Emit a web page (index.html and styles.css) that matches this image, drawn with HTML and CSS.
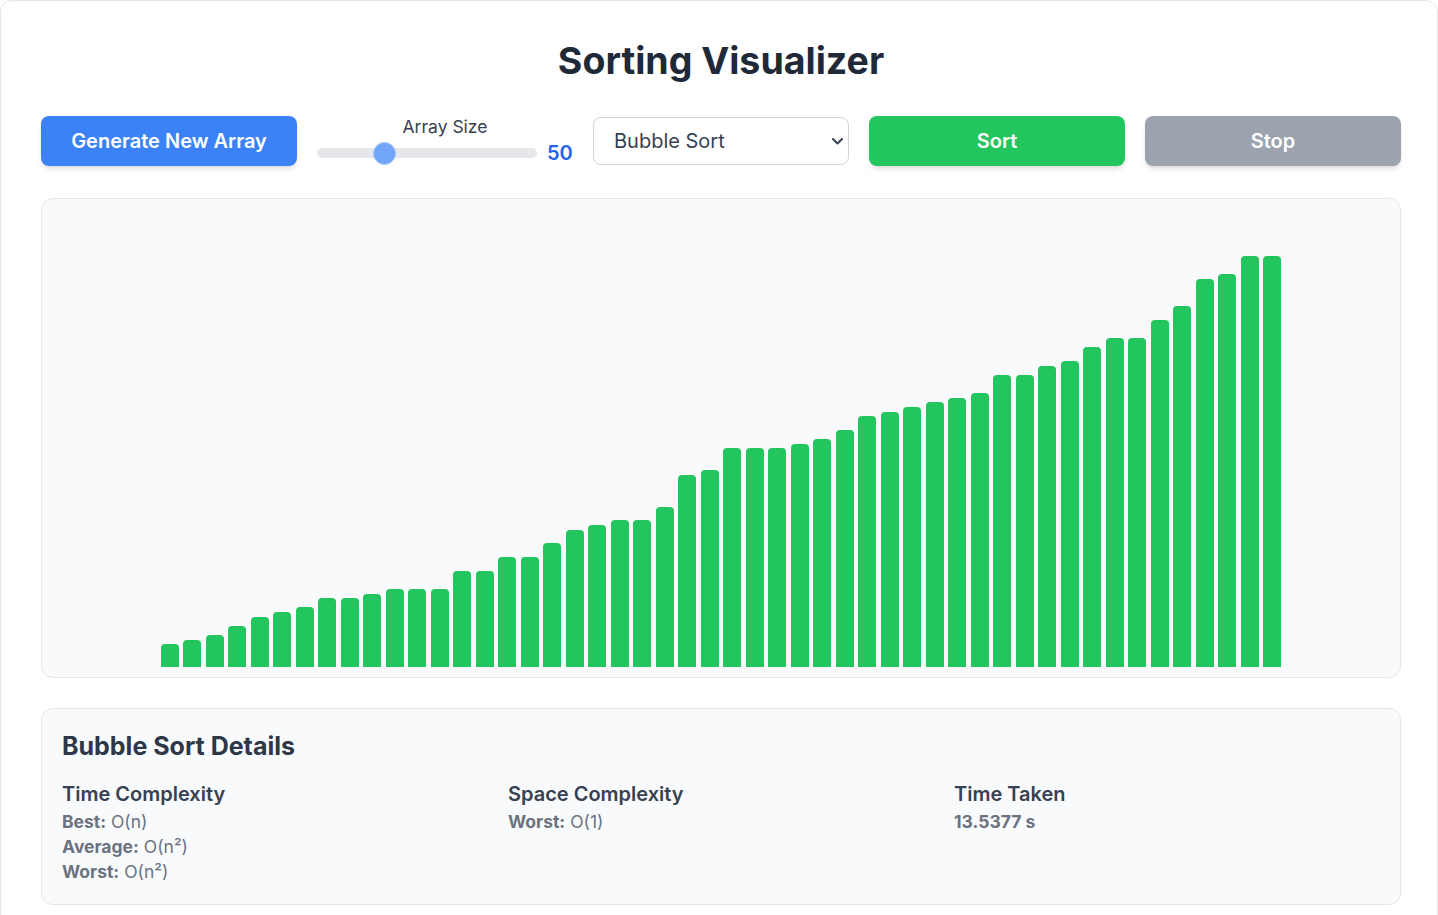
FILE: index.html
```html
<!DOCTYPE html>
<html lang="en">
<head>
<meta charset="utf-8">
<title>Sorting Visualizer</title>
<link rel="stylesheet" href="styles.css">
</head>
<body>
<div class="app">
  <h1 class="title">Sorting Visualizer</h1>
  <div class="controls">
    <button class="btn btn-blue">Generate New Array</button>
    <div class="size-group">
      <label class="size-label" for="size">Array Size</label>
      <div class="size-row">
        <input id="size" class="range" type="range" min="10" max="150" value="50">
        <span class="size-value">50</span>
      </div>
    </div>
    <div class="select-wrap">
      <select class="algo-select">
        <option>Bubble Sort</option>
        <option>Selection Sort</option>
        <option>Insertion Sort</option>
        <option>Merge Sort</option>
        <option>Quick Sort</option>
      </select>
      <svg class="chevron" width="11" height="7" viewBox="0 0 11 7" aria-hidden="true"><polyline points="1,1 5.5,5.5 10,1" fill="none" stroke="#374151" stroke-width="2" stroke-linecap="round" stroke-linejoin="round"/></svg>
    </div>
    <button class="btn btn-green">Sort</button>
    <button class="btn btn-gray">Stop</button>
  </div>

  <div class="chart">
    <div class="bar" style="height:22.7px"></div>
    <div class="bar" style="height:26.7px"></div>
    <div class="bar" style="height:31.7px"></div>
    <div class="bar" style="height:40.7px"></div>
    <div class="bar" style="height:49.7px"></div>
    <div class="bar" style="height:54.7px"></div>
    <div class="bar" style="height:59.7px"></div>
    <div class="bar" style="height:68.7px"></div>
    <div class="bar" style="height:68.7px"></div>
    <div class="bar" style="height:72.7px"></div>
    <div class="bar" style="height:77.7px"></div>
    <div class="bar" style="height:77.7px"></div>
    <div class="bar" style="height:77.7px"></div>
    <div class="bar" style="height:95.7px"></div>
    <div class="bar" style="height:95.7px"></div>
    <div class="bar" style="height:109.7px"></div>
    <div class="bar" style="height:109.7px"></div>
    <div class="bar" style="height:123.7px"></div>
    <div class="bar" style="height:136.7px"></div>
    <div class="bar" style="height:141.7px"></div>
    <div class="bar" style="height:146.7px"></div>
    <div class="bar" style="height:146.7px"></div>
    <div class="bar" style="height:159.7px"></div>
    <div class="bar" style="height:191.7px"></div>
    <div class="bar" style="height:196.7px"></div>
    <div class="bar" style="height:219px"></div>
    <div class="bar" style="height:219px"></div>
    <div class="bar" style="height:219px"></div>
    <div class="bar" style="height:223px"></div>
    <div class="bar" style="height:228px"></div>
    <div class="bar" style="height:237px"></div>
    <div class="bar" style="height:251px"></div>
    <div class="bar" style="height:255px"></div>
    <div class="bar" style="height:260px"></div>
    <div class="bar" style="height:265px"></div>
    <div class="bar" style="height:269px"></div>
    <div class="bar" style="height:274px"></div>
    <div class="bar" style="height:292px"></div>
    <div class="bar" style="height:292px"></div>
    <div class="bar" style="height:301px"></div>
    <div class="bar" style="height:306px"></div>
    <div class="bar" style="height:320px"></div>
    <div class="bar" style="height:329px"></div>
    <div class="bar" style="height:329px"></div>
    <div class="bar" style="height:347px"></div>
    <div class="bar" style="height:361px"></div>
    <div class="bar" style="height:388px"></div>
    <div class="bar" style="height:393px"></div>
    <div class="bar" style="height:411px"></div>
    <div class="bar" style="height:411px"></div>
  </div>

  <section class="details">
    <h2 class="details-title">Bubble Sort Details</h2>
    <div class="details-grid">
      <div class="detail-col">
        <h3 class="detail-head">Time Complexity</h3>
        <p class="detail-line"><b>Best:</b> O(n)</p>
        <p class="detail-line"><b>Average:</b> O(n²)</p>
        <p class="detail-line"><b>Worst:</b> O(n²)</p>
      </div>
      <div class="detail-col">
        <h3 class="detail-head">Space Complexity</h3>
        <p class="detail-line"><b>Worst:</b> O(1)</p>
      </div>
      <div class="detail-col">
        <h3 class="detail-head">Time Taken</h3>
        <p class="detail-line"><b>13.5377 s</b></p>
      </div>
    </div>
  </section>
</div>
</body>
</html>
```

FILE: styles.css
```css
* { box-sizing: border-box; }

html, body {
  margin: 0;
  padding: 0;
  background: #ffffff;
}

body {
  font-family: Inter, "Noto Sans", "Liberation Sans", sans-serif;
  color: #1f2937;
}

.app {
  width: 100%;
  min-height: 1000px;
  border: 1px solid #e5e7eb;
  border-radius: 12px;
  padding: 40px 36px 40px 40px;
  background: #ffffff;
}

.title {
  margin: 0 0 35px;
  text-align: center;
  font-size: 37.5px;
  line-height: 40px;
  font-weight: 700;
  color: #1f2937;
}

.controls {
  display: grid;
  grid-template-columns: repeat(5, 1fr);
  gap: 20px;
  align-items: center;
  height: 50px;
}

.btn {
  height: 50px;
  border: none;
  border-radius: 8px;
  font-family: inherit;
  font-size: 20px;
  font-weight: 600;
  color: #ffffff;
  box-shadow: 0 4px 6px -1px rgba(0,0,0,0.1), 0 2px 4px -2px rgba(0,0,0,0.1);
  cursor: pointer;
}

.btn-blue { background: #3b82f6; }
.btn-green { background: #22c55e; }
.btn-gray { background: #9ca3af; }

.size-group {
  display: flex;
  flex-direction: column;
  align-items: center;
  height: 50px;
}

.size-label {
  font-size: 17.5px;
  line-height: 22px;
  height: 22px;
  color: #374151;
}

.size-row {
  display: flex;
  align-items: center;
  gap: 10px;
  width: 100%;
  height: 26px;
  margin-top: 2px;
}

.range {
  -webkit-appearance: none;
  appearance: none;
  flex: 1;
  margin: 0;
  height: 10px;
  border-radius: 5px;
  background: #e5e7eb;
  outline: none;
}

.range::-webkit-slider-thumb {
  -webkit-appearance: none;
  appearance: none;
  width: 23px;
  height: 23px;
  border-radius: 50%;
  background: #70a5f7;
  border: 1px solid #a9c8f8;
}

.size-value {
  font-size: 20px;
  line-height: 26px;
  font-weight: 600;
  color: #2563eb;
  width: 26px;
}

.select-wrap {
  position: relative;
  height: 48px;
}

.algo-select {
  -webkit-appearance: none;
  appearance: none;
  height: 48px;
  width: 100%;
  border: 1px solid #d1d5db;
  border-radius: 8px;
  background-color: #ffffff;
  font-family: inherit;
  font-size: 20px;
  color: #374151;
  padding: 0 30px 0 20px;
}

.chevron {
  position: absolute;
  right: 6px;
  top: 21px;
  pointer-events: none;
}

.chart {
  margin-top: 32px;
  height: 480px;
  background: #f9fafb;
  border: 1px solid #e5e7eb;
  border-radius: 12px;
  display: flex;
  justify-content: center;
  align-items: flex-end;
  padding-bottom: 10px;
}

.bar {
  width: 18px;
  margin: 0 2.25px;
  background: #22c55e;
  border-radius: 4px 4px 0 0;
}

.details {
  margin-top: 30px;
  background: #f9fafb;
  border: 1px solid #e5e7eb;
  border-radius: 12px;
  padding: 20px;
}

.details-title {
  margin: 0 0 17px;
  font-size: 25px;
  line-height: 34px;
  font-weight: 700;
  color: #2d3748;
}

.details-grid {
  display: grid;
  grid-template-columns: repeat(3, 1fr);
  gap: 20px;
}

.detail-head {
  margin: 0 0 1px;
  font-size: 20px;
  line-height: 28px;
  font-weight: 600;
  color: #374151;
}

.detail-line {
  margin: 0;
  font-size: 17.5px;
  line-height: 25px;
  color: #6b7280;
}

.detail-line b {
  font-weight: 700;
}
```
